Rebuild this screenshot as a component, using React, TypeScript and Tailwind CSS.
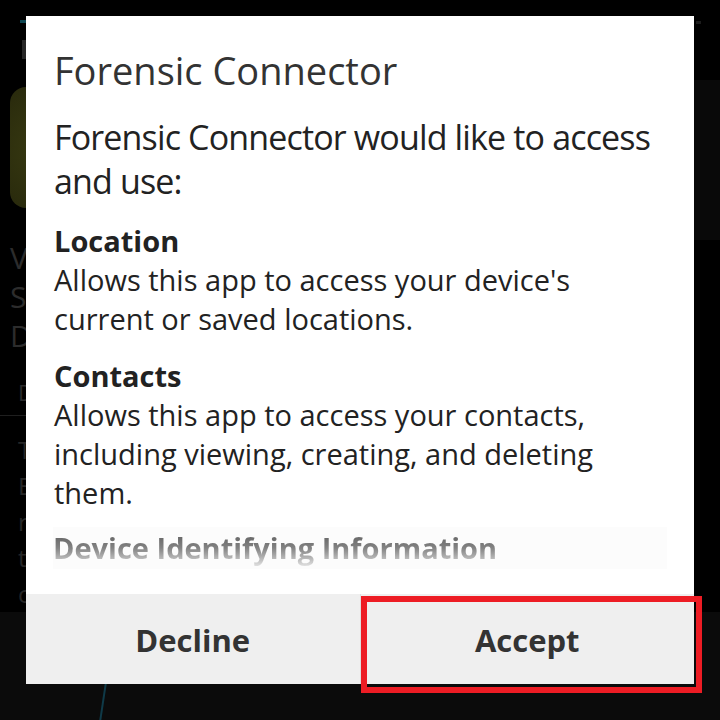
export default function App() {
  return (
    <div className="relative h-[720px] w-[720px] overflow-hidden bg-black font-['Open_Sans','Noto_Sans',sans-serif]">
      {/* dimmed app behind the dialog */}
      <div className="flex h-full flex-col">
        <div className="flex h-[612px]">
          <div className="flex w-[26px] flex-col">
            <div className="ml-[20px] mt-[20px] h-[3px] w-[6px] bg-[#0e4651]" />
            <div className="ml-[22px] mt-[17px] h-[22px] w-[4px] bg-[#262626]" />
            <div className="ml-[10px] mt-[28px] h-[136px] w-[60px] rounded-[16px] bg-[radial-gradient(circle_at_70%_50%,#3a3c12,#28290c)]" />
            <div className="ml-[10px] mt-[30px] flex flex-col text-[30px] leading-[39px] text-[#2c2c2c]">
              <span>V</span>
              <span>S</span>
              <span>D</span>
            </div>
            <div className="ml-[18px] mt-[24px] text-[22px] leading-[26px] text-[#2a2a2a]">D</div>
            <div className="mt-[10px] h-px w-full bg-[#1f1f1f]" />
            <div className="ml-[18px] mt-[16px] flex flex-col text-[24px] leading-[36px] text-[#262626]">
              <span>T</span>
              <span>E</span>
              <span>r</span>
              <span>t</span>
              <span>c</span>
            </div>
          </div>
          <div className="flex-1" />
          <div className="flex w-[26px] flex-col">
            <div className="ml-[2px] mt-[21px] h-[3px] w-[5px] bg-[#1c1c1c]" />
            <div className="mt-[56px] h-[160px] bg-[#090909]" />
          </div>
        </div>
        <div className="flex-1 bg-[#0b0b0b]">
          <svg width="12" height="40" className="ml-[98px] mt-[70px]">
            <line x1="8" y1="0" x2="2" y2="40" stroke="#0f3a48" strokeWidth="2" />
          </svg>
        </div>
      </div>

      {/* permission dialog */}
      <div className="absolute left-[26px] top-[16px] flex h-[668px] w-[668px] flex-col bg-white">
        <div className="flex flex-1 flex-col overflow-hidden px-[28px] pt-[30px]">
          <h1 className="text-[38px] leading-[48px] text-[#333]">Forensic Connector</h1>
          <p className="mt-[21px] text-[34px] leading-[44px] tracking-[-0.85px] text-[#222]">
            Forensic Connector would like to access and use:
          </p>
          <div className="mt-[18px]">
            <h2 className="text-[29px] font-bold leading-[40px] text-[#222]">Location</h2>
            <p className="-mt-px text-[29px] leading-[39px] text-[#222]">
              Allows this app to access your device's current or saved locations.
            </p>
          </div>
          <div className="mt-[18px]">
            <h2 className="text-[29px] font-bold leading-[40px] text-[#222]">Contacts</h2>
            <p className="-mt-px text-[29px] leading-[39px] text-[#222]">
              Allows this app to access your contacts, including viewing, creating, and deleting them.
            </p>
          </div>
          <div className="-mx-px mt-[15px] bg-[#fcfcfc] py-[3px]">
            <h2 className="bg-gradient-to-b from-[#5a5a5a] via-[#838383] to-[#e0e0e0] bg-clip-text text-[29px] font-bold leading-[36px] text-transparent">
              Device Identifying Information
            </h2>
          </div>
        </div>
        <div className="flex h-[90px] bg-[#efefef]">
          <button className="flex flex-1 items-center justify-center pt-[3px] text-[31px] font-bold text-[#333]">
            Decline
          </button>
          <div className="w-px bg-[#dedede]" />
          <button className="flex flex-1 items-center justify-center pt-[3px] text-[31px] font-bold text-[#333]">
            Accept
          </button>
        </div>
      </div>

      {/* highlight box */}
      <div className="absolute left-[361px] top-[596px] h-[97px] w-[341px] border-[6px] border-[#ed1c24]" />
    </div>
  );
}
